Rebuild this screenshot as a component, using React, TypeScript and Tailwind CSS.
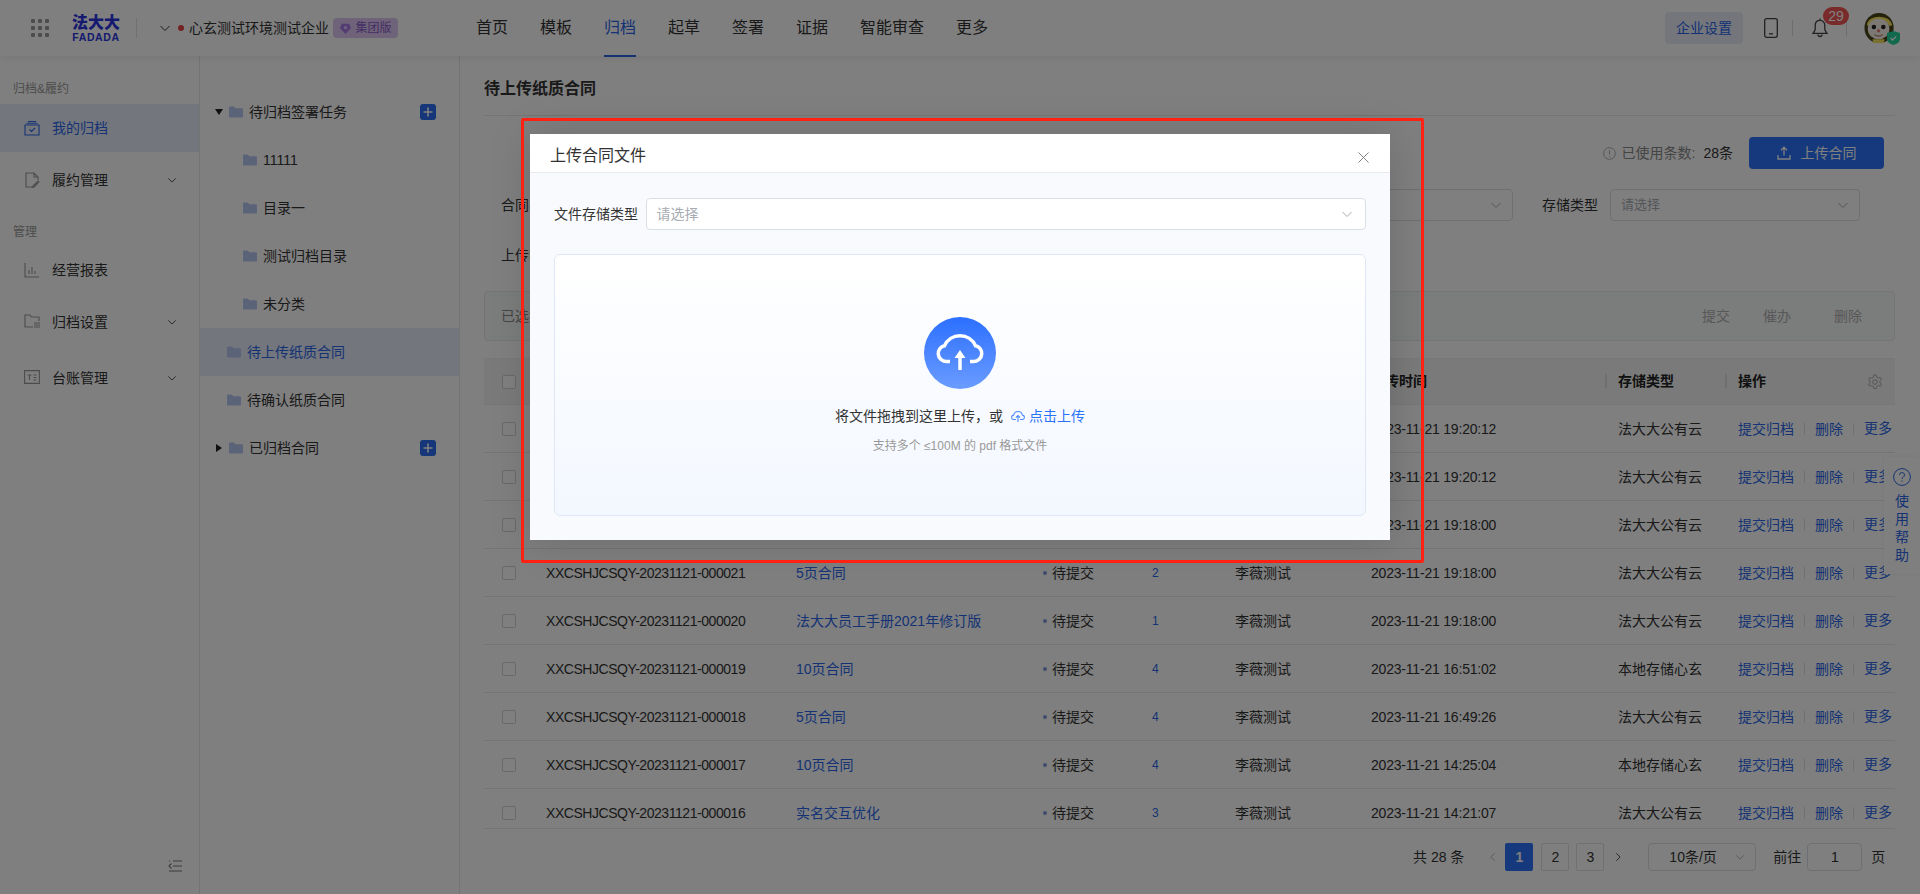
import React from "react";

const Chevron = ({ className = "" }: { className?: string }) => (
  <svg viewBox="0 0 12 12" className={className} fill="none" stroke="currentColor" strokeWidth="1">
    <path d="M1.5 4 L6 8.5 L10.5 4" />
  </svg>
);

const Folder = ({ className = "" }: { className?: string }) => (
  <svg viewBox="0 0 15 12" className={className} fill="#b4c6f0">
    <path d="M0 1.2C0 .5.5 0 1.2 0h3.6c.4 0 .7.2.9.5L6.8 2h7c.7 0 1.2.5 1.2 1.2v7.6c0 .7-.5 1.2-1.2 1.2H1.2C.5 12 0 11.5 0 10.8z" />
  </svg>
);

const Plus = () => (
  <span className="ml-auto mr-[23px] flex h-[16px] w-[16px] items-center justify-center rounded-[3px] bg-[#2a6cf0]">
    <svg viewBox="0 0 16 16" className="h-[16px] w-[16px]" stroke="#fff" strokeWidth="1.6">
      <path d="M8 3.5v9M3.5 8h9" />
    </svg>
  </span>
);

const NavItem = ({ icon, label, active, arrow }: { icon: React.ReactNode; label: string; active?: boolean; arrow?: boolean }) => (
  <div className={`flex h-[48px] items-center pl-[24px] pr-[22px] ${active ? "bg-[#e6ecf8] text-[#2a66e8]" : "text-[#333]"}`}>
    <span className={`mr-[12px] h-[16px] w-[16px] ${active ? "text-[#2a66e8]" : "text-[#999]"}`}>{icon}</span>
    <span className="text-[14px]">{label}</span>
    {arrow && <Chevron className="ml-auto h-[10px] w-[10px] text-[#333]" />}
  </div>
);

const TreeChild = ({ label }: { label: string }) => (
  <div className="flex h-[48px] items-center pl-[43px] text-[14px] text-[#333]">
    <Folder className="mr-[6px] h-[12px] w-[14px]" />
    {label}
  </div>
);

const rows = [
  ["000024", "5页合同", "3", "2023-11-21 19:20:12", "法大大公有云"],
  ["000023", "5页合同", "3", "2023-11-21 19:20:12", "法大大公有云"],
  ["000022", "10页合同", "2", "2023-11-21 19:18:00", "法大大公有云"],
  ["000021", "5页合同", "2", "2023-11-21 19:18:00", "法大大公有云"],
  ["000020", "法大大员工手册2021年修订版", "1", "2023-11-21 19:18:00", "法大大公有云"],
  ["000019", "10页合同", "4", "2023-11-21 16:51:02", "本地存储心玄"],
  ["000018", "5页合同", "4", "2023-11-21 16:49:26", "法大大公有云"],
  ["000017", "10页合同", "4", "2023-11-21 14:25:04", "本地存储心玄"],
  ["000016", "实名交互优化", "3", "2023-11-21 14:21:07", "法大大公有云"],
];

const gridCols = "grid grid-cols-[62px_250px_249px_107px_83px_136px_247px_120px_157px] items-center";

const Check = () => <span className="ml-[18px] block h-[14px] w-[14px] rounded-[2px] border border-[#d0d3d8] bg-white" />;

const Select = ({ className = "" }: { className?: string }) => (
  <div className={`flex h-[32px] items-center justify-between rounded-[4px] border border-[#dcdfe6] bg-white pl-[10px] pr-[10px] text-[13px] text-[#a8abb2] ${className}`}>
    <span>请选择</span>
    <Chevron className="h-[12px] w-[12px] text-[#a8abb2]" />
  </div>
);

const HeadCell = ({ label, sep }: { label: string; sep?: boolean }) => (
  <div className="relative text-[14px] font-bold text-[#222]">
    {label}
    {sep && <span className="absolute left-[-13px] top-[3px] h-[14px] w-[2px] bg-[#dcdfe0]" />}
  </div>
);

const Avatar = () => (
  <div className="relative h-[32px] w-[34px]">
    <svg viewBox="0 0 34 32" className="h-[32px] w-[32px]">
      <ellipse cx="16" cy="16" rx="15.5" ry="16" fill="#4a4418" />
      <path d="M3 13C4 1 28 1 30 13l-3 1C22 5 10 5 6 14z" fill="#f6e25c" />
      <ellipse cx="15.5" cy="17" rx="11.500" ry="11" fill="#f8f0e8" />
      <circle cx="10.500" cy="15" r="2.400" fill="#222" />
      <circle cx="20.500" cy="15" r="2.400" fill="#222" />
      <circle cx="15.500" cy="19" r="1.800" fill="#e87a7a" />
      <path d="M11 23q4.500 3 9 0" stroke="#c98" strokeWidth="1.4" fill="none" />
      <path d="M9 28h13l-1 4H10z" fill="#f6e25c" />
    </svg>
    <svg viewBox="0 0 13 14" className="absolute left-[23px] top-[19px] h-[14px] w-[13px]">
      <path d="M6.500 0 13 2v6c0 3-3 5-6.500 6C3 13 0 11 0 8V2z" fill="#22d49a" />
      <path d="M3.600 7l2 2 3.600-3.600" stroke="#fff" strokeWidth="1.3" fill="none" />
    </svg>
  </div>
);

export default function App() {
  return (
    <div
      className="relative h-[894px] w-[1920px] overflow-hidden bg-white text-[#333]"
      style={{ fontFamily: '"Liberation Sans","Noto Sans CJK SC",sans-serif' }}
    >
      {/* header */}
      <header className="relative z-10 flex h-[56px] items-center bg-white shadow-[0_2px_8px_rgba(0,0,0,0.08)]">
        <div className="ml-[31px] grid h-[18px] w-[18px] grid-cols-3 gap-[3px]">
          {Array.from({ length: 9 }).map((_, i) => (
            <span key={i} className="h-[4px] w-[4px] rounded-[1px] bg-[#9a9a9a]" />
          ))}
        </div>
        <div className="ml-[22px] flex w-[50px] flex-col items-center text-[#2a34e0]">
          <span className="text-[16px] font-black leading-[15px]">法大大</span>
          <span className="mt-[3px] text-[10.5px] font-bold leading-[8px] tracking-[0.6px]">FADADA</span>
        </div>
        <span className="ml-[15px] h-[20px] w-px bg-[#e3e3e3]" />
        <Chevron className="ml-[22px] h-[12px] w-[12px] text-[#333]" />
        <span className="ml-[7px] h-[6px] w-[6px] rounded-full bg-[#e64545]" />
        <span className="ml-[5px] text-[14px] text-[#333]">心玄测试环境测试企业</span>
        <span className="ml-[4px] flex h-[20px] w-[65px] items-center justify-center rounded-[4px] bg-[#dcc6f2] text-[12px] text-[#8b5cc9]">
          <svg viewBox="0 0 14 14" className="mr-[3px] h-[13px] w-[13px]">
            <path d="M7 13 1 6.500 3 2h8l2 4.500z" fill="#a97be6" />
            <circle cx="7" cy="6" r="1.800" fill="#dcc6f2" />
          </svg>
          集团版
        </span>
        <nav className="ml-[78px] flex h-full items-center gap-[32px] text-[16px] text-[#333]">
          <span>首页</span>
          <span>模板</span>
          <span className="relative flex h-full items-center text-[#2a66e8]">
            归档
            <span className="absolute bottom-[-1px] left-0 right-0 h-[2px] bg-[#2a66e8]" />
          </span>
          <span>起草</span>
          <span>签署</span>
          <span>证据</span>
          <span>智能审查</span>
          <span>更多</span>
        </nav>
        <div className="ml-auto flex items-center">
          <span className="flex h-[32px] w-[78px] items-center justify-center rounded-[4px] bg-[#e8edf8] text-[14px] text-[#2a66e8]">企业设置</span>
          <svg viewBox="0 0 14 20" className="ml-[21px] h-[20px] w-[14px]" fill="none" stroke="#444" strokeWidth="1.3">
            <rect x=".7" y=".7" width="12.6" height="18.6" rx="2" />
            <path d="M5 15.800h4" />
          </svg>
          <span className="ml-[14px] h-[16px] w-px bg-[#ddd]" />
          <span className="relative ml-[19px] block h-[20px] w-[16px]">
            <svg viewBox="0 0 16 20" className="h-[20px] w-[16px]" fill="none" stroke="#444" strokeWidth="1.3">
              <path d="M8 2.300c-3 0-4.800 2.300-4.800 5.200v4.300L1 15.300h14l-2.200-3.500V7.500C12.800 4.600 11 2.300 8 2.300zM8 .5v1.800M6 16.500a2 2 0 0 0 4 0" />
            </svg>
            <span className="absolute left-[11px] top-[-11px] flex h-[18px] w-[26px] items-center justify-center rounded-full bg-[#f25555] text-[14px] leading-none text-white">29</span>
          </span>
          <span className="ml-[18px] h-[16px] w-px bg-[#ddd]" />
          <span className="ml-[17px] mr-[22px]">
            <Avatar />
          </span>
        </div>
      </header>

      {/* body */}
      <div className="flex h-[838px]">
        {/* first sidebar */}
        <aside className="relative w-[200px] shrink-0 border-r border-[#e8e8e8] bg-white">
          <div className="pl-[13px] pt-[24px] text-[12px] leading-[18px] text-[#999]">归档&履约</div>
          <div className="mt-[6px]">
            <NavItem
              active
              label="我的归档"
              icon={
                <svg viewBox="0 0 16 16" fill="none" stroke="currentColor" strokeWidth="1.1" className="h-[16px] w-[16px]">
                  <path d="M1 5h14v10H1zM4 1.500h8M2.500 3.300h11M5.500 9.500l2 2 3.500-3.500" />
                </svg>
              }
            />
            <div className="mt-[4px]">
              <NavItem
                arrow
                label="履约管理"
                icon={
                  <svg viewBox="0 0 16 16" fill="none" stroke="currentColor" strokeWidth="1.1" className="h-[16px] w-[16px]">
                    <path d="M9 15H2V1h8l4 4v3M10 1v4h4M9 14l5-5 1 1-5 5-1.500.500z" />
                  </svg>
                }
              />
            </div>
          </div>
          <div className="mt-[19px] pl-[13px] text-[12px] leading-[18px] text-[#999]">管理</div>
          <div className="mt-[5px]">
            <NavItem
              label="经营报表"
              icon={
                <svg viewBox="0 0 16 16" fill="none" stroke="currentColor" strokeWidth="1.1" className="h-[16px] w-[16px]">
                  <path d="M1 1v14h14M5 12V8M8 12V5M11 12V9" />
                </svg>
              }
            />
            <div className="mt-[4px]">
              <NavItem
                arrow
                label="归档设置"
                icon={
                  <svg viewBox="0 0 16 14" fill="none" stroke="currentColor" strokeWidth="1.1" className="h-[14px] w-[16px]">
                    <path d="M9 13H1V1h5l1.500 2H15v4M10 9h6M10 11h6M10 13h6" />
                  </svg>
                }
              />
            </div>
            <div className="mt-[8px]">
              <NavItem
                arrow
                label="台账管理"
                icon={
                  <svg viewBox="0 0 16 14" fill="none" stroke="currentColor" strokeWidth="1.1" className="h-[14px] w-[16px]">
                    <path d="M.6.6h14.800v12.800H.6zM3.500 5h4M5.500 5v5M9.500 5h3M9.500 7.500h3M9.500 10h3" />
                  </svg>
                }
              />
            </div>
          </div>
          <svg viewBox="0 0 14 12" className="absolute bottom-[22px] left-[168px] h-[12px] w-[14px]" fill="none" stroke="#777" strokeWidth="1.1">
            <path d="M5 1h9M5 6h9M1 11h13M3.500 3.500 1 6l2.500 2.500M1 1h1" />
          </svg>
        </aside>

        {/* second sidebar */}
        <aside className="w-[260px] shrink-0 border-r border-[#e8e8e8] bg-white pt-[32px]">
          <div className="flex h-[48px] items-center pl-[15px] text-[14px] text-[#333]">
            <span className="mr-[6px] h-0 w-0 border-x-[4px] border-t-[6px] border-x-transparent border-t-[#222]" />
            <Folder className="mr-[6px] h-[12px] w-[14px]" />
            待归档签署任务
            <Plus />
          </div>
          <TreeChild label="11111" />
          <TreeChild label="目录一" />
          <TreeChild label="测试归档目录" />
          <TreeChild label="未分类" />
          <div className="flex h-[48px] items-center bg-[#e6ecf8] pl-[27px] text-[14px] text-[#2a66e8]">
            <Folder className="mr-[6px] h-[12px] w-[14px]" />
            待上传纸质合同
          </div>
          <div className="flex h-[48px] items-center pl-[27px] text-[14px] text-[#333]">
            <Folder className="mr-[6px] h-[12px] w-[14px]" />
            待确认纸质合同
          </div>
          <div className="flex h-[48px] items-center pl-[16px] text-[14px] text-[#333]">
            <span className="mr-[7px] h-0 w-0 border-y-[4px] border-l-[6px] border-y-transparent border-l-[#222]" />
            <Folder className="mr-[6px] h-[12px] w-[14px]" />
            已归档合同
            <Plus />
          </div>
        </aside>

        {/* main */}
        <main className="w-[1460px] pl-[24px] pr-[25px]">
          <div className="h-[60px] border-b border-[#e8e8e8] pt-[22px] text-[16px] font-bold leading-[22px] text-[#333]">待上传纸质合同</div>
          <div className="mt-[21px] flex h-[32px] items-center justify-end pr-[11px]">
            <svg viewBox="0 0 14 14" className="h-[13px] w-[13px]" fill="none" stroke="#aaa" strokeWidth="1">
              <circle cx="7" cy="7" r="6.300" />
              <path d="M7 3.500v4.500M7 9.500v1" />
            </svg>
            <span className="ml-[6px] text-[14px] text-[#888]">已使用条数:</span>
            <span className="ml-[8px] text-[14px] text-[#333]">28条</span>
            <span className="ml-[16px] flex h-[32px] w-[135px] items-center justify-center rounded-[4px] bg-[#2a72f8] text-[14px] text-white">
              <svg viewBox="0 0 14 14" className="mr-[10px] h-[14px] w-[14px]" fill="none" stroke="#fff" strokeWidth="1.3">
                <path d="M7 9.500V1.500M4 4.200 7 1.200l3 3M1 9v4h12V9" />
              </svg>
              上传合同
            </span>
          </div>
          <div className="mt-[20px] flex h-[32px] items-center pl-[17px] text-[14px]">
            <span className="w-[65px] text-[#333]">合同名</span>
            <div className="h-[32px] w-[300px] rounded-[4px] border border-[#dcdfe6] bg-white" />
            <span className="ml-[324px] w-[65px] text-[#333]">上传人</span>
            <Select className="w-[258px]" />
            <span className="ml-[29px] w-[68px] text-[#333]">存储类型</span>
            <Select className="w-[250px]" />
          </div>
          <div className="mt-[18px] flex h-[32px] items-center pl-[17px] text-[14px] text-[#333]">
            <span>上传时间</span>
          </div>
          <div className="mt-[20px] flex h-[50px] items-center rounded-[4px] border border-[#e8e8e8] bg-[#f7f8f9] pl-[16px] text-[14px] text-[#b0b0b0]">
            <span className="text-[#888]">已选择 0 条</span>
            <span className="ml-auto">提交</span>
            <span className="ml-[33px]">催办</span>
            <span className="ml-[43px] mr-[32px]">删除</span>
          </div>
          <div className={`mt-[17px] h-[47px] border-y border-[#eceeec] bg-[#f2f5f3] ${gridCols}`}>
            <Check />
            <HeadCell label="合同编号" />
            <HeadCell label="合同名称" sep />
            <HeadCell label="状态" sep />
            <HeadCell label="份数" sep />
            <HeadCell label="上传人" sep />
            <HeadCell label="上传时间" sep />
            <HeadCell label="存储类型" sep />
            <div className="relative flex items-center">
              <HeadCell label="操作" sep />
              <svg viewBox="0 0 16 16" className="ml-[101px] h-[16px] w-[16px]" fill="none" stroke="#aaa" strokeWidth="1">
                <path d="M6.800 1h2.400l.4 2 1.700 1 2-.7 1.200 2.100-1.600 1.400v1.900l1.600 1.400-1.200 2.100-2-.7-1.700 1-.4 2H6.800l-.4-2-1.700-1-2 .7-1.200-2.100 1.600-1.400V7.100L1.500 5.700l1.200-2.100 2 .7 1.700-1z" />
                <circle cx="8" cy="8" r="2.300" />
              </svg>
            </div>
          </div>
          <div className="h-[424px] overflow-hidden border-b border-[#e8e8e8]">
            {rows.map((r) => (
              <div key={r[0]} className={`h-[48px] border-b border-[#e8e8e8] pt-[1px] text-[14px] text-[#333] ${gridCols}`}>
                <Check />
                <span className="tracking-[-0.45px]">XXCSHJCSQY-20231121-{r[0]}</span>
                <span className="text-[#2a66e8]">{r[1]}</span>
                <span className="flex items-center">
                  <span className="ml-[-2px] mr-[5px] h-[4px] w-[4px] rounded-full bg-[#7d9ae0]" />
                  待提交
                </span>
                <span className="text-[12px] text-[#2a66e8]">{r[2]}</span>
                <span>李薇测试</span>
                <span className="tracking-[-0.2px]">{r[3]}</span>
                <span>{r[4]}</span>
                <span className="flex items-center text-[#2a66e8]">
                  提交归档
                  <span className="mx-[10px] h-[12px] w-px bg-[#e0e0e0]" />
                  删除
                  <span className="mx-[10px] h-[12px] w-px bg-[#e0e0e0]" />
                  <span className="mt-[-2px]">更多</span>
                </span>
              </div>
            ))}
          </div>
          <div className="mt-[14px] flex h-[28px] items-center text-[14px] text-[#333]">
            <span className="ml-[929px]">共 28 条</span>
            <Chevron className="ml-[24px] h-[10px] w-[10px] rotate-90 text-[#aaa]" />
            <span className="ml-[7px] flex h-[28px] w-[28px] items-center justify-center rounded-[2px] bg-[#2a72f8] font-bold text-white">1</span>
            <span className="ml-[8px] flex h-[28px] w-[28px] items-center justify-center rounded-[2px] border border-[#e0e0e0]">2</span>
            <span className="ml-[7px] flex h-[28px] w-[28px] items-center justify-center rounded-[2px] border border-[#e0e0e0]">3</span>
            <Chevron className="ml-[9px] h-[10px] w-[10px] -rotate-90 text-[#333]" />
            <span className="ml-[25px] flex h-[28px] w-[108px] items-center justify-between rounded-[4px] border border-[#dcdfe6] pl-[20px] pr-[10px]">
              10条/页
              <Chevron className="h-[10px] w-[10px] text-[#aaa]" />
            </span>
            <span className="ml-[17px]">前往</span>
            <span className="ml-[6px] flex h-[28px] w-[55px] items-center justify-center rounded-[4px] border border-[#dcdfe6]">1</span>
            <span className="ml-[9px]">页</span>
          </div>
        </main>
      </div>

      {/* floating help */}
      <div className="absolute left-[1884px] top-[457px] flex h-[117px] w-[36px] flex-col items-center bg-white text-[14px] leading-[18px] text-[#2a66e8] shadow-[0_0_6px_rgba(0,0,0,0.06)]">
        <svg viewBox="0 0 18 18" className="mt-[11px] h-[18px] w-[18px]" fill="none" stroke="#2a66e8" strokeWidth="1">
          <circle cx="9" cy="9" r="8.400" />
          <path d="M6.500 7a2.500 2.500 0 1 1 3.700 2.200c-.8.500-1.200.9-1.200 1.800M9 12.500v1.300" />
        </svg>
        <span className="mt-[6px] block w-[14px]">使用帮助</span>
      </div>

      {/* mask */}
      <div className="absolute inset-0 z-20 bg-black/50" />

      {/* dialog */}
      <div className="absolute left-[530px] top-[134px] z-30 h-[406px] w-[860px] overflow-hidden bg-[#f9fafd] shadow-[0_2px_40px_rgba(0,0,0,0.15)]">
        <div className="flex h-[39px] items-center justify-between border-b border-[#e8eaed] bg-white pl-[20px] pr-[21px]">
          <span className="mt-[6px] text-[16px] text-[#333]">上传合同文件</span>
          <svg viewBox="0 0 12 12" className="mt-[8px] h-[11px] w-[11px]" fill="none" stroke="#777" strokeWidth="1">
            <path d="M.5.5l11 11M11.500.5l-11 11" />
          </svg>
        </div>
        <div className="mt-[25px] flex h-[32px] items-center pl-[24px]">
          <span className="w-[91.500px] text-[14px] text-[#333]">文件存储类型</span>
          <Select className="w-[720.500px] !pl-[10px] !pr-[12px] !text-[14px]" />
        </div>
        <div className="ml-[24px] mt-[24px] flex h-[262px] w-[812px] flex-col items-center rounded-[6px] border border-[#dfe7f6] bg-gradient-to-b from-white to-[#f3f7ff] pt-[62px]">
          <div className="flex h-[72px] w-[72px] items-center justify-center rounded-full bg-gradient-to-b from-[#2b6fff] to-[#6a9bff]">
            <svg viewBox="0 0 72 72" className="h-[72px] w-[72px]" fill="none" stroke="#fff" strokeWidth="3.500">
              <path d="M26 44.500h-4a8 8 0 0 1-1.500-15.800a17 17 0 0 1 31 0a8 8 0 0 1-1.500 15.800h-4" />
              <path d="M36 53V37" />
              <path d="M36 33l5.500 8h-11z" fill="#fff" stroke="none" />
            </svg>
          </div>
          <div className="mt-[17px] flex h-[20px] items-center text-[14px] text-[#333]">
            将文件拖拽到这里上传，或
            <svg viewBox="0 0 14 14" className="ml-[8px] h-[14px] w-[14px]" fill="none" stroke="#4d8bff" strokeWidth="1.100">
              <path d="M5 10.500H3a2.200 2.200 0 0 1-.4-4.400a4.500 4.500 0 0 1 8.800 0A2.200 2.200 0 0 1 11 10.500H9M7 13V6.500M5 8.500l2-2 2 2" />
            </svg>
            <span className="ml-[4px] text-[#2a72f8]">点击上传</span>
          </div>
          <div className="mt-[11px] text-[12px] leading-[18px] text-[#999]">支持多个 ≤100M 的 pdf 格式文件</div>
        </div>
      </div>

      {/* annotation */}
      <div className="absolute left-[521px] top-[118px] z-40 h-[445px] w-[903px] rounded-[2px] border-[3px] border-[#ff2213]" />
    </div>
  );
}
